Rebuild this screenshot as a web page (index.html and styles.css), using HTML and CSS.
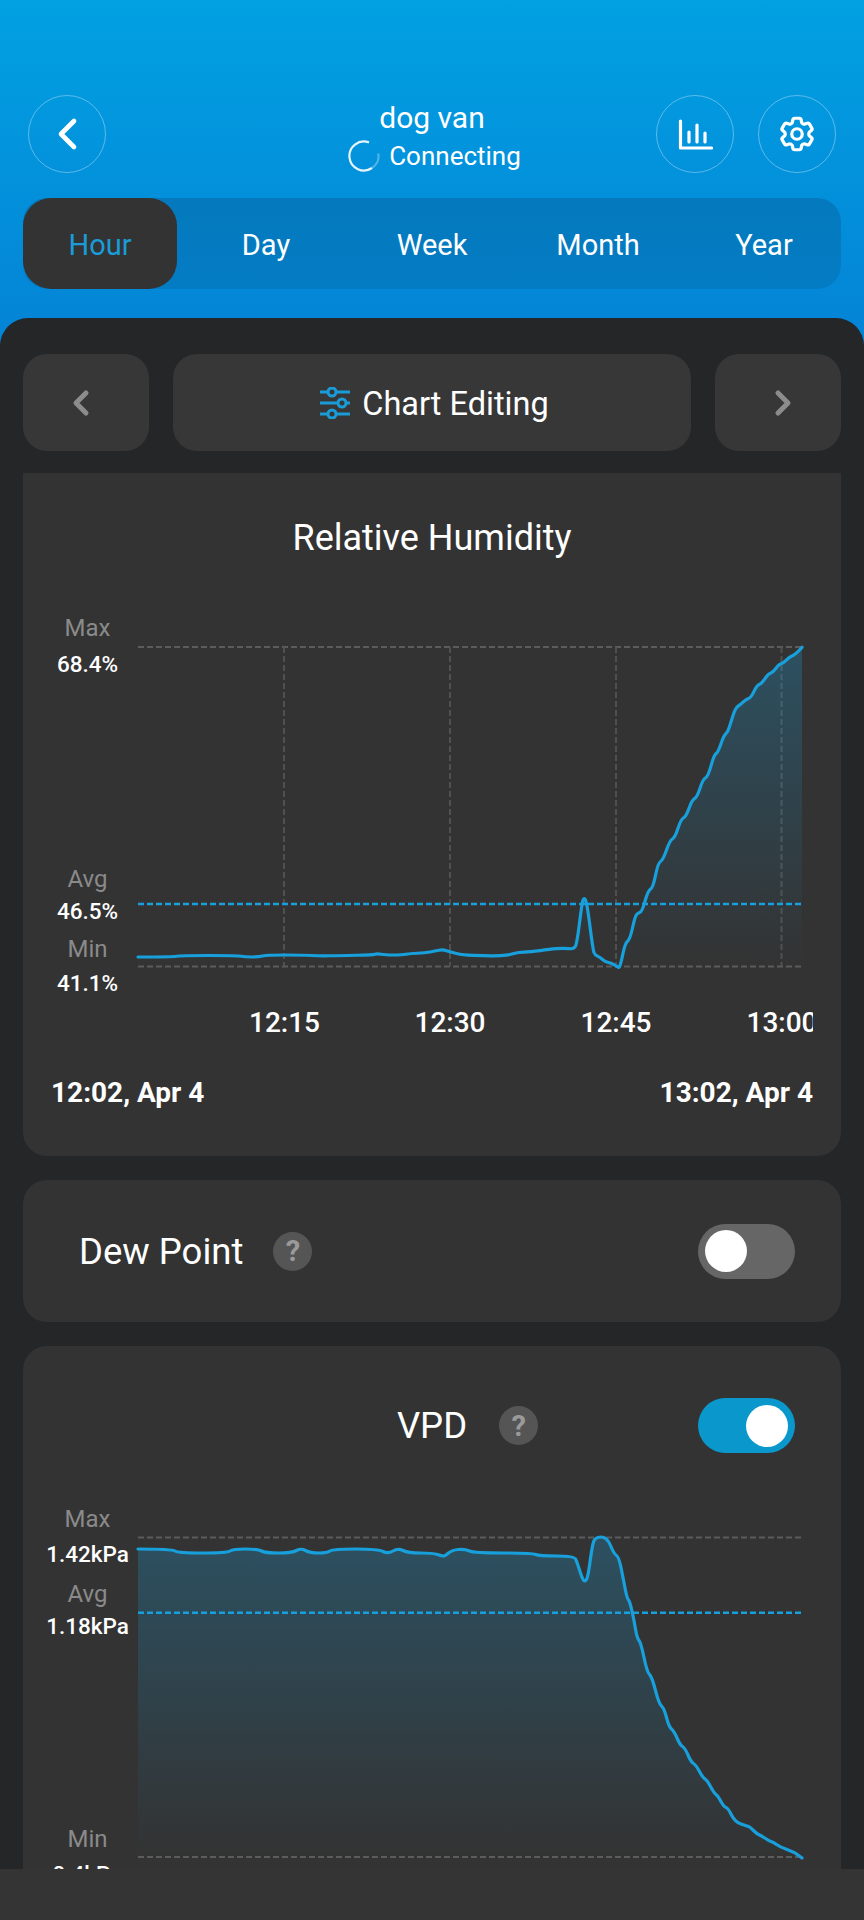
FILE: index.html
```html
<!DOCTYPE html>
<html lang="en">
<head>
    <meta charset="UTF-8">
    <meta name="viewport" content="width=device-width, initial-scale=1.0">
    <title>dog van</title>
    <link rel="stylesheet" href="styles.css">
</head>
<body>
    <header class="header">
        <div class="top-row">
            <button class="round-btn">
                <svg width="24" height="34" viewBox="0 0 24 34"><path class="icon-line" d="M19 4 6 17l13 13" stroke-width="4.6"/></svg>
            </button>
            <div class="device">
                <div class="device-name">dog van</div>
                <div class="device-status">
                    <svg class="spinner" width="32" height="32" viewBox="0 0 32 32">
                        <path class="spin-main" d="M21 2.4A14.5 14.5 0 1 0 24 28"/>
                        <path class="spin-fade" d="M24 28A14.5 14.5 0 0 0 30.3 13.5"/>
                    </svg>
                    <span>Connecting</span>
                </div>
            </div>
            <div class="top-actions">
                <button class="round-btn">
                    <svg width="36" height="34" viewBox="0 0 36 34"><path class="icon-line" d="M3.5 4v27h31M12 15v10M20 8v17M28 16v9" stroke-width="3.2"/></svg>
                </button>
                <button class="round-btn">
                    <svg width="42" height="42" viewBox="0 0 24 24">
                        <path class="icon-line" stroke-width="1.85" d="M9.594 3.94c.09-.542.56-.94 1.11-.94h2.593c.55 0 1.02.398 1.11.94l.213 1.281c.063.374.313.686.645.87.074.04.147.083.22.127.325.196.72.257 1.075.124l1.217-.456a1.125 1.125 0 0 1 1.37.49l1.296 2.247a1.125 1.125 0 0 1-.26 1.431l-1.003.827c-.293.241-.438.613-.43.992a7.723 7.723 0 0 1 0 .255c-.008.378.137.75.43.991l1.004.827c.424.35.534.955.26 1.43l-1.298 2.247a1.125 1.125 0 0 1-1.369.491l-1.217-.456c-.355-.133-.75-.072-1.076.124a6.47 6.47 0 0 1-.22.128c-.331.183-.581.495-.644.869l-.213 1.281c-.09.543-.56.94-1.11.94h-2.594c-.55 0-1.019-.398-1.11-.94l-.213-1.281c-.062-.374-.312-.686-.644-.87a6.52 6.52 0 0 1-.22-.127c-.325-.196-.72-.257-1.076-.124l-1.217.456a1.125 1.125 0 0 1-1.369-.49l-1.297-2.247a1.125 1.125 0 0 1 .26-1.431l1.004-.827c.292-.24.437-.613.43-.991a6.932 6.932 0 0 1 0-.255c.007-.38-.138-.751-.43-.992l-1.004-.827a1.125 1.125 0 0 1-.26-1.43l1.297-2.247a1.125 1.125 0 0 1 1.37-.491l1.216.456c.356.133.751.072 1.076-.124.072-.044.146-.086.22-.128.332-.183.582-.495.644-.869l.214-1.28Z"/>
                        <path class="icon-line" stroke-width="1.85" d="M15 12a3 3 0 1 1-6 0 3 3 0 0 1 6 0Z"/>
                    </svg>
                </button>
            </div>
        </div>
        <nav class="tabs">
            <div class="tab active">Hour</div>
            <div class="tab">Day</div>
            <div class="tab">Week</div>
            <div class="tab">Month</div>
            <div class="tab">Year</div>
        </nav>
    </header>

    <main class="sheet">
        <div class="chart-nav">
            <button class="nav-btn nav-prev">
                <svg width="20" height="28" viewBox="0 0 20 28"><path class="chev" d="M15 4 5 14l10 10"/></svg>
            </button>
            <button class="nav-btn nav-main">
                <svg width="32" height="32" viewBox="0 0 32 32">
                    <path class="slider-line" d="M1 5h8M17 5h14M1 16h18M27 16h4M1 27h8M17 27h14"/>
                    <circle class="slider-knob" cx="13" cy="5" r="4"/>
                    <circle class="slider-knob" cx="23" cy="16" r="4"/>
                    <circle class="slider-knob" cx="13" cy="27" r="4"/>
                </svg>
                <span class="nav-label">Chart Editing</span>
            </button>
            <button class="nav-btn nav-next">
                <svg width="20" height="28" viewBox="0 0 20 28"><path class="chev" d="m5 4 10 10L5 24"/></svg>
            </button>
        </div>

        <section class="card card-flat">
            <h2 class="card-title">Relative Humidity</h2>
            <svg class="chart" width="762" height="440" viewBox="51 610 762 440">
                <defs>
                    <linearGradient id="fill-rh" gradientUnits="userSpaceOnUse" x1="0" y1="647" x2="0" y2="967">
                        <stop offset="0" stop-color="#1a9fdc" stop-opacity=".27"/>
                        <stop offset="1" stop-color="#1a9fdc" stop-opacity="0"/>
                    </linearGradient>
                </defs>
                <path class="grid" d="M138 647H803M138 966.5H803"/>
                <path class="grid grid-v" d="M284 647V966M450 647V966M616 647V966M781.5 647V966"/>
                <path id="rh-area" fill="url(#fill-rh)"/>
                <path class="avg" d="M138 904H803"/>
                <path id="rh-line" class="line"/>
                <text class="stat-name" x="87.5" y="636">Max</text>
                <text class="stat-value" x="87.5" y="672">68.4%</text>
                <text class="stat-name" x="87.5" y="887">Avg</text>
                <text class="stat-value" x="87.5" y="919">46.5%</text>
                <text class="stat-name" x="87.5" y="957">Min</text>
                <text class="stat-value" x="87.5" y="991">41.1%</text>
                <text class="tick" x="284.5" y="1032">12:15</text>
                <text class="tick" x="450" y="1032">12:30</text>
                <text class="tick" x="616" y="1032">12:45</text>
                <text class="tick" x="782" y="1032">13:00</text>
            </svg>
            <div class="range">
                <span>12:02, Apr 4</span>
                <span>13:02, Apr 4</span>
            </div>
        </section>

        <section class="card card-row">
            <span class="row-label">Dew Point</span>
            <span class="help">?</span>
            <span class="switch"><span class="knob"></span></span>
        </section>

        <section class="card card-vpd">
            <div class="vpd-head">
                <span class="row-label">VPD</span>
                <div class="vpd-tools">
                    <span class="help">?</span>
                    <span class="switch on"><span class="knob"></span></span>
                </div>
            </div>
            <svg class="chart chart-open" width="762" height="400" viewBox="51 1500 762 400">
                <defs>
                    <linearGradient id="fill-vpd" gradientUnits="userSpaceOnUse" x1="0" y1="1538" x2="0" y2="1857">
                        <stop offset="0" stop-color="#1a9fdc" stop-opacity=".27"/>
                        <stop offset="1" stop-color="#1a9fdc" stop-opacity="0"/>
                    </linearGradient>
                </defs>
                <path class="grid" d="M138 1537.5H803M138 1857H803"/>
                <path id="vpd-area" fill="url(#fill-vpd)"/>
                <path class="avg" d="M138 1612.7H803"/>
                <path id="vpd-line" class="line"/>
                <text class="stat-name" x="87.5" y="1527">Max</text>
                <text class="stat-value" x="87.5" y="1562">1.42kPa</text>
                <text class="stat-name" x="87.5" y="1602">Avg</text>
                <text class="stat-value" x="87.5" y="1634">1.18kPa</text>
                <text class="stat-name" x="87.5" y="1847">Min</text>
                <text class="stat-value" x="87.5" y="1882">0.4kPa</text>
            </svg>
        </section>
    </main>

    <footer class="bottom-bar"></footer>
    <script src="chart.js"></script>
</body>
</html>
```

FILE: styles.css
```css
* {
    box-sizing: border-box;
}

html, body {
    margin: 0;
    height: 1920px;
    overflow: hidden;
}

body {
    display: flex;
    flex-direction: column;
    font-family: Roboto, "Noto Sans", sans-serif;
    color: #fff;
    background: linear-gradient(180deg, #01a1e2 0, #0484d6 330px);
}

button {
    border: 0;
    padding: 0;
    font: inherit;
    color: inherit;
    background: none;
}

/* header */
.header {
    flex: none;
    height: 318px;
    padding: 95px 23px 0;
}

.top-row {
    display: grid;
    grid-template-columns: 1fr auto 1fr;
    align-items: center;
    height: 78px;
    padding: 0 5px;
}

.round-btn {
    display: flex;
    align-items: center;
    justify-content: center;
    width: 78px;
    height: 78px;
    border: 1px solid rgba(255, 255, 255, .35);
    border-radius: 50%;
}

.icon-line {
    fill: none;
    stroke: #fff;
    stroke-linecap: round;
    stroke-linejoin: round;
}

.device {
    display: flex;
    flex-direction: column;
    align-items: center;
    height: 78px;
    padding-top: 5px;
}

.device-name {
    font-size: 30px;
    line-height: 36px;
}

.device-status {
    display: flex;
    flex: none;
    align-items: center;
    gap: 9px;
    height: 40px;
    margin-left: 5px;
    font-size: 26px;
}

.spin-main,
.spin-fade {
    fill: none;
    stroke-width: 2.2;
}

.spin-main {
    stroke: rgba(255, 255, 255, .9);
}

.spin-fade {
    stroke: rgba(255, 255, 255, .3);
}

.top-actions {
    display: flex;
    justify-content: flex-end;
    gap: 24px;
}

.tabs {
    display: grid;
    grid-template-columns: repeat(5, 1fr);
    gap: 12px;
    height: 91px;
    margin-top: 25px;
    border-radius: 24px;
    background: linear-gradient(180deg, #0479bd, #047cc4);
}

.tab {
    display: flex;
    align-items: center;
    justify-content: center;
    padding-top: 3px;
    font-size: 29px;
    border-radius: 28px;
}

.tab.active {
    color: #1a9cd8;
    background: #333;
}

/* sheet */
.sheet {
    flex: 1;
    min-height: 0;
    padding: 36px 23px 0;
    overflow: hidden;
    border-radius: 28px 28px 0 0;
    background: #252628;
}

.chart-nav {
    display: grid;
    grid-template-columns: 126px 1fr 126px;
    gap: 24px;
    height: 97px;
    margin-bottom: 22px;
}

.nav-btn {
    display: flex;
    align-items: center;
    justify-content: center;
    gap: 11px;
    border-radius: 24px;
    background: #373737;
    font-size: 32.5px;
}

.nav-prev {
    padding-right: 10px;
}

.nav-next {
    padding-left: 10px;
}

.nav-main {
    padding-left: 4px;
}

.nav-label {
    padding-top: 3px;
}

.chev {
    fill: none;
    stroke: #8c8c8c;
    stroke-width: 5;
    stroke-linecap: round;
    stroke-linejoin: round;
}

.slider-line,
.slider-knob {
    fill: none;
    stroke: #1a9cd8;
    stroke-width: 3;
}

.card {
    margin-bottom: 24px;
    border-radius: 24px;
    background: #333;
}

.card-flat {
    height: 683px;
    padding: 45px 28px 0;
    border-radius: 0 0 24px 24px;
}

.card-title {
    margin: 0 0 52px;
    font-size: 36px;
    line-height: 40px;
    font-weight: 400;
    text-align: center;
}

.chart {
    display: block;
}

.chart-open {
    overflow: visible;
}

.line {
    fill: none;
    stroke: #18a0dc;
    stroke-width: 3.2;
    stroke-linejoin: round;
    stroke-linecap: round;
}

.grid {
    fill: none;
    stroke: #5c5c5c;
    stroke-width: 2;
    stroke-dasharray: 6 3;
}

.grid-v {
    stroke: #505050;
}

.avg {
    fill: none;
    stroke: #18a0dc;
    stroke-width: 2.5;
    stroke-dasharray: 6 3;
}

.stat-name {
    font-size: 24px;
    fill: #8a8a8a;
    text-anchor: middle;
}

.stat-value {
    font-size: 22.5px;
    font-weight: 500;
    fill: #fff;
    text-anchor: middle;
}

.tick {
    font-size: 28px;
    font-weight: 500;
    fill: #fff;
    text-anchor: middle;
}

.range {
    display: flex;
    justify-content: space-between;
    margin-top: 27px;
    font-size: 28px;
    line-height: 32px;
    font-weight: 700;
}

.card-row {
    display: flex;
    align-items: center;
    height: 142px;
    padding: 0 46px 0 56px;
}

.row-label {
    font-size: 36.5px;
}

.help {
    display: flex;
    align-items: center;
    justify-content: center;
    width: 39px;
    height: 39px;
    border-radius: 50%;
    background: #555;
    color: #9a9a9a;
    font-size: 29px;
    font-weight: 700;
}

.card-row .help {
    margin-left: 30px;
}

.switch {
    display: flex;
    align-items: center;
    width: 97px;
    height: 55px;
    margin-left: auto;
    padding: 0 7px;
    border-radius: 28px;
    background: #666;
}

.switch.on {
    justify-content: flex-end;
    background: #0a98cc;
}

.knob {
    width: 42px;
    height: 42px;
    border-radius: 50%;
    background: #fff;
}

.card-vpd {
    margin-bottom: 0;
    padding: 52px 28px 0;
}

.vpd-head {
    display: grid;
    grid-template-columns: 1fr auto 1fr;
    align-items: center;
    height: 55px;
    margin-bottom: 47px;
    padding: 0 18px;
}

.vpd-head .row-label {
    grid-column: 2;
}

.vpd-tools {
    display: flex;
    align-items: center;
    margin-left: 32px;
}

.bottom-bar {
    flex: none;
    height: 51px;
    background: #343434;
}
```

FILE: chart.js
```js
// readings, in the svg's own coordinates
const rhPoints = [
    [138,957],[173,957],[180,955.5],[238,955.5],[245,957],[258,957],[267,955],[303,955],[320,956],[340,955.5],
    [373,955],[377,953.5],[385,955],[402,955],[410,953.5],[425,953],[435,951],[443,949.5],[450,952],[463,955],
    [483,955.7],[500,956],[512,954.3],[518,952.3],[530,952],[550,949.3],[563,948],[574,949.3],[577,943],[582,903],
    [584,897],[587,903],[593,950],[595,955],[600,957.3],[605,961.7],[612,963.3],[617,966.7],[620,968],[625,943.3],
    [630,939.3],[635,916.7],[638,913],[642,911.7],[648,890.7],[653,887.7],[658,863],[663,860],[670,840],[675,837.7],
    [681,819],[686,816.7],[692,800],[697,797.3],[703,779],[708,776.7],[714,755],[718,752.3],[724,735],[728,732.3],
    [735,708.3],[740,705],[746,699.3],[751,697.7],[757,685],[762,683.3],[768,674],[773,672.3],[779,664.3],[783,663.3],
    [789,657.3],[793,655.7],[798,651.7],[802,647.3]
];

const vpdPoints = [
    [138,1549],[172,1549],[178,1553],[227,1553],[233,1549],[258,1549],[265,1553],[292,1553],[301,1548],[310,1553],
    [327,1553],[333,1549],[378,1549],[388,1554],[398,1548],[408,1553],[433,1553],[442,1556],[445,1556],[452,1550],
    [465,1549],[474,1553],[532,1553],[539,1556],[574,1556],[577,1562],[582,1578],[585,1582],[588,1577],[592,1547],
    [595,1537],[607,1537],[614,1554],[619,1557],[624,1583],[627,1598],[630,1602],[634,1620],[637,1638],[641,1643],
    [647,1672],[652,1677],[659,1704],[664,1708],[669,1727],[674,1731],[680,1745],[685,1748],[691,1762],[696,1765],
    [703,1778],[707,1780],[714,1793],[718,1796],[724,1807],[728,1808],[735,1822],[747,1826],[750,1827],[757,1834],
    [762,1836],[769,1841],[773,1842],[780,1847],[794,1852],[802,1858]
];

function smoothPath(points) {
    let d = `M${points[0][0]} ${points[0][1]}`;
    for (let i = 1; i < points.length - 1; i++) {
        const midX = (points[i][0] + points[i + 1][0]) / 2;
        const midY = (points[i][1] + points[i + 1][1]) / 2;
        d += `Q${points[i][0]} ${points[i][1]} ${midX} ${midY}`;
    }
    const last = points[points.length - 1];
    return d + `L${last[0]} ${last[1]}`;
}

function drawChart(name, points, bottom) {
    const d = smoothPath(points);
    const lastX = points[points.length - 1][0];
    document.getElementById(name + '-line').setAttribute('d', d);
    document.getElementById(name + '-area').setAttribute('d', `${d}L${lastX} ${bottom}L${points[0][0]} ${bottom}Z`);
}

drawChart('rh', rhPoints, 967);
drawChart('vpd', vpdPoints, 1858);
```
